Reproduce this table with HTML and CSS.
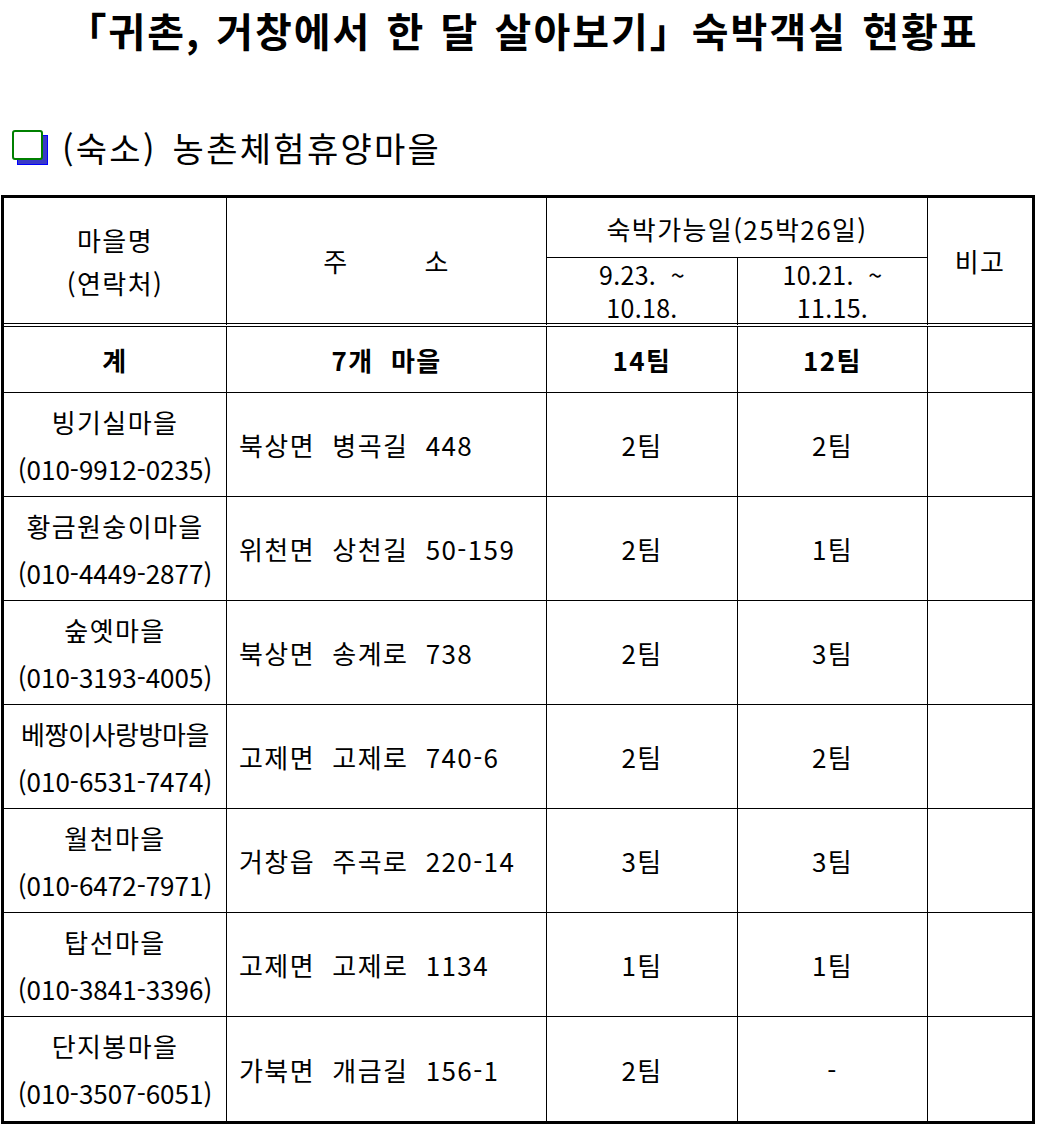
FILE: index.html
```html
<!DOCTYPE html>
<html lang="ko">
<head>
<meta charset="utf-8">
<link rel="stylesheet" href="styles.css">
</head>
<body>
<h1 class="title">「귀촌, 거창에서 한 달 살아보기」숙박객실 현황표</h1>
<div class="section">
  <span class="box"><span class="box-shadow"></span><span class="box-face"></span></span>
  <span class="section-text">(숙소) 농촌체험휴양마을</span>
</div>
<div class="grid">
  <div class="c c-name hd span2 dbl"><span>마을명<br>(연락처)</span></div>
  <div class="c hd span2 dbl spaced">주<span class="gap"></span>소</div>
  <div class="c hd wide">숙박가능일(25박26일)</div>
  <div class="c hd span2 dbl last">비고</div>
  <div class="c date dbl"><span>9.23.&nbsp; ~<br>10.18.</span></div>
  <div class="c date dbl"><span>10.21.&nbsp; ~<br>11.15.</span></div>

  <div class="c sum">계</div>
  <div class="c sum">7개&nbsp; 마을</div>
  <div class="c sum">14팀</div>
  <div class="c sum">12팀</div>
  <div class="c sum last"></div>

  <div class="c row"><span>빙기실마을<br><span class="ph">(010-9912-0235)</span></span></div>
  <div class="c row addr">북상면&nbsp; 병곡길&nbsp; 448</div>
  <div class="c row">2팀</div>
  <div class="c row">2팀</div>
  <div class="c row last"></div>

  <div class="c row"><span>황금원숭이마을<br><span class="ph">(010-4449-2877)</span></span></div>
  <div class="c row addr">위천면&nbsp; 상천길&nbsp; 50-159</div>
  <div class="c row">2팀</div>
  <div class="c row">1팀</div>
  <div class="c row last"></div>

  <div class="c row"><span>숲옛마을<br><span class="ph">(010-3193-4005)</span></span></div>
  <div class="c row addr">북상면&nbsp; 송계로&nbsp; 738</div>
  <div class="c row">2팀</div>
  <div class="c row">3팀</div>
  <div class="c row last"></div>

  <div class="c row"><span><span class="narrow">베짱이사랑방마을</span><br><span class="ph">(010-6531-7474)</span></span></div>
  <div class="c row addr">고제면&nbsp; 고제로&nbsp; 740-6</div>
  <div class="c row">2팀</div>
  <div class="c row">2팀</div>
  <div class="c row last"></div>

  <div class="c row"><span>월천마을<br><span class="ph">(010-6472-7971)</span></span></div>
  <div class="c row addr">거창읍&nbsp; 주곡로&nbsp; 220-14</div>
  <div class="c row">3팀</div>
  <div class="c row">3팀</div>
  <div class="c row last"></div>

  <div class="c row"><span>탑선마을<br><span class="ph">(010-3841-3396)</span></span></div>
  <div class="c row addr">고제면&nbsp; 고제로&nbsp; 1134</div>
  <div class="c row">1팀</div>
  <div class="c row">1팀</div>
  <div class="c row last"></div>

  <div class="c row end"><span>단지봉마을<br><span class="ph">(010-3507-6051)</span></span></div>
  <div class="c row addr end">가북면&nbsp; 개금길&nbsp; 156-1</div>
  <div class="c row end">2팀</div>
  <div class="c row end">-</div>
  <div class="c row end last"></div>
</div>
</body>
</html>
```
FILE: styles.css
```css
html, body {
  margin: 0;
  padding: 0;
  background: #fff;
  color: #000;
  font-family: "Noto Sans CJK KR", "Noto Sans", sans-serif;
}
.title {
  margin: 0;
  height: 66px;
  padding-left: 6px;
  text-align: center;
  font-size: 40px;
  font-weight: 700;
  line-height: 60px;
  letter-spacing: 2px;
  word-spacing: 2px;
  white-space: nowrap;
}
.section {
  display: flex;
  align-items: center;
  height: 35px;
  margin-top: 64px;
  margin-bottom: 30px;
  padding-left: 12px;
}
.box {
  position: relative;
  width: 36px;
  height: 35px;
  flex: none;
}
.box-shadow {
  position: absolute;
  left: 5px;
  top: 5px;
  width: 31px;
  height: 30px;
  background: #3a3ac8;
  border: 1px solid #0000ff;
  box-sizing: border-box;
}
.box-face {
  position: absolute;
  left: 0;
  top: 0;
  width: 31px;
  height: 30px;
  background: #fff;
  border: 2px solid #008000;
  border-radius: 3px;
  box-sizing: border-box;
}
.section-text {
  margin-left: 14px;
  font-size: 34px;
  line-height: 40px;
  letter-spacing: 2.3px;
  word-spacing: 4px;
  white-space: nowrap;
}
.grid {
  margin-left: 1px;
  width: 1034px;
  box-sizing: border-box;
  border: 3px solid #000;
  display: grid;
  grid-template-columns: 223px 320px 191px 190px 104px;
  grid-template-rows: 60px 69px 66px repeat(6, 104px) 104px;
}
.c {
  box-sizing: border-box;
  border-right: 1px solid #000;
  border-bottom: 1px solid #000;
  display: flex;
  align-items: center;
  justify-content: center;
  text-align: center;
  font-size: 26px;
  line-height: 47px;
  letter-spacing: 1.4px;
  white-space: nowrap;
}
.ph { letter-spacing: 0; }
.narrow { letter-spacing: -0.4px; }
.c.last { border-right: none; }
.c.end { border-bottom: none; }
.span2 { grid-row: span 2; }
.wide { grid-column: span 2; }
.dbl { border-bottom: 4px double #000; }
.hd { line-height: 43px; }
.hd.wide { padding-top: 2px; }
.gap { display: inline-block; width: 76px; }
.date { font-size: 25px; line-height: 33px; letter-spacing: 0.3px; }
.sum { font-weight: 700; }
.addr {
  justify-content: flex-start;
  padding-left: 12px;
}
```
